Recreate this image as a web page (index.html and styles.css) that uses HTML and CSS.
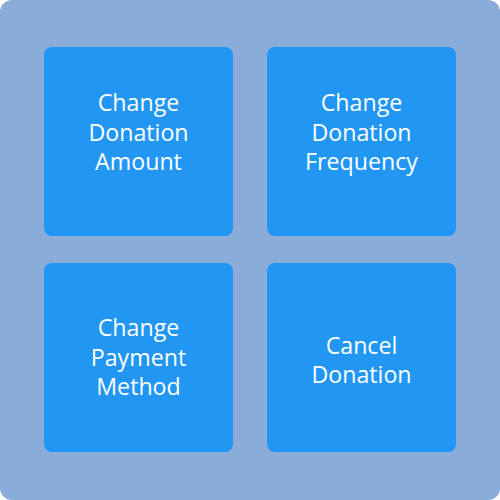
FILE: index.html
```html
<!DOCTYPE html>
<html>
<head>
<meta charset="utf-8">
<link rel="stylesheet" href="styles.css">
</head>
<body>
<div class="panel">
  <div class="grid">
    <div class="tile top"><span>Change<br>Donation<br>Amount</span></div>
    <div class="tile top"><span>Change<br>Donation<br>Frequency</span></div>
    <div class="tile"><span>Change<br>Payment<br>Method</span></div>
    <div class="tile low"><span>Cancel<br>Donation</span></div>
  </div>
</div>
</body>
</html>
```

FILE: styles.css
```css
html, body {
  margin: 0;
  padding: 0;
  background: #ffffff;
}
.panel {
  width: 500px;
  height: 500px;
  box-sizing: border-box;
  background: #8aacd9;
  border-radius: 12px;
  padding: 47px 44px 48px 44px;
}
.grid {
  display: grid;
  grid-template-columns: 189px 189px;
  grid-template-rows: 189px 189px;
  column-gap: 34px;
  row-gap: 27px;
}
.tile {
  background: #2196f3;
  border-radius: 8px;
  display: flex;
  align-items: center;
  justify-content: center;
  text-align: center;
  color: #ffffff;
  font-family: "Open Sans", "Noto Sans", sans-serif;
  font-size: 23.2px;
  line-height: 29.5px;
  box-sizing: border-box;
}
.tile.top {
  padding-bottom: 18px;
}
.tile.low {
  padding-top: 5px;
}
```
